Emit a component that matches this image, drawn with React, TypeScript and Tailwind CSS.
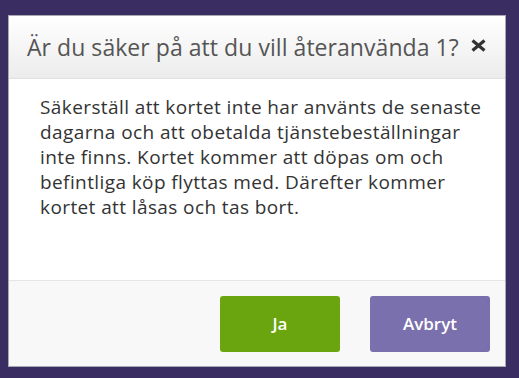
export default function App() {
  return (
    <div className="h-[378px] w-[519px] bg-[#3a2d62] pt-[15px] pl-[8px]" style={{ fontFamily: '"Open Sans", "Liberation Sans", sans-serif' }}>
      <div className="flex h-[352px] w-[498px] flex-col border border-[#a9a9b3] bg-white">
        <div className="flex h-[63px] items-center justify-between border-b border-[#e0e0e0] bg-gradient-to-b from-white to-[#ececec] pl-[18px] pr-[18px]">
          <h2 className="text-[23px] leading-none tracking-[0.05px] text-[#555]">Är du säker på att du vill återanvända 1?</h2>
          <svg width="17" height="13" viewBox="0 0 17 13" className="mb-[3px]">
            <path d="M2.5 1.5 L14.5 11.5 M14.5 1.5 L2.5 11.5" stroke="#333" strokeWidth="3.2" />
          </svg>
        </div>
        <div className="flex-1 pl-[31px] pr-[10px] pt-[16px] text-[19px] leading-[25px] tracking-[0.4px] text-[#333]">
          Säkerställ att kortet inte har använts de senaste
          <br />
          dagarna och att obetalda tjänstebeställningar
          <br />
          inte finns. Kortet kommer att döpas om och
          <br />
          befintliga köp flyttas med. Därefter kommer
          <br />
          kortet att låsas och tas bort.
        </div>
        <div className="flex h-[86px] items-center justify-end gap-[30px] border-t border-[#e5e5e5] bg-[#f8f8f8] pr-[15px]">
          <button className="h-[56px] w-[120px] rounded-[3px] bg-[#6aa50f] text-[17px] font-semibold text-white">Ja</button>
          <button className="h-[56px] w-[120px] rounded-[3px] bg-[#7a70ae] text-[17px] font-semibold text-white">Avbryt</button>
        </div>
      </div>
    </div>
  );
}
